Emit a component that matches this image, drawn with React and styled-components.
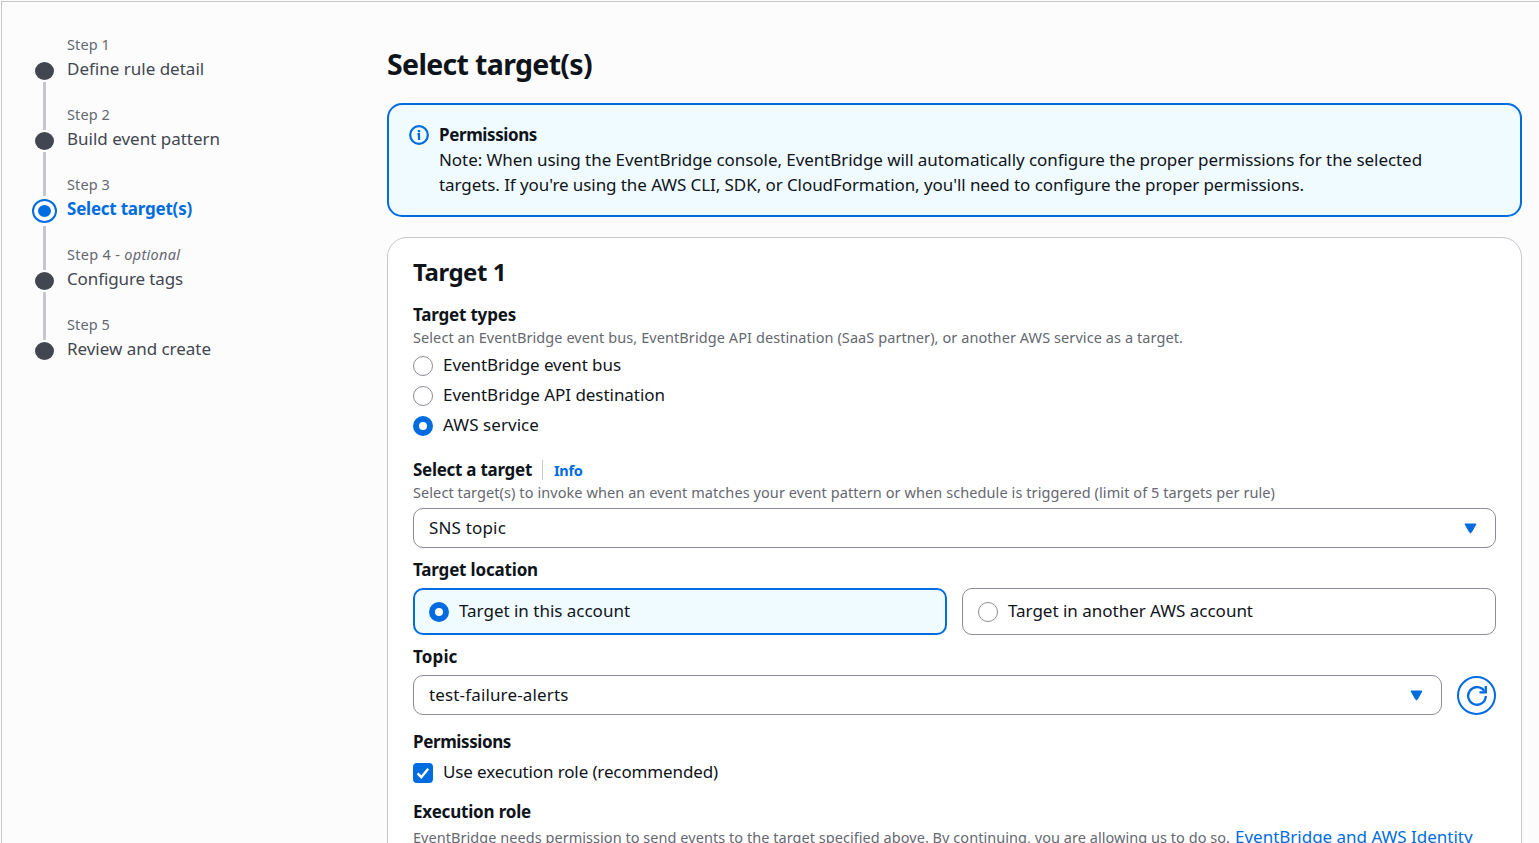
import React from 'react';
import styled, { createGlobalStyle, css } from 'styled-components';

const color = {
  text: '#0f141a',
  body: '#424650',
  muted: '#656871',
  accent: '#006ce0',
  accentBg: '#f0fbff',
  border: '#c6c6cd',
  control: '#8c8c94',
  page: '#fcfcfd',
};

const GlobalStyle = createGlobalStyle`
  *, *::before, *::after { box-sizing: border-box; }
  html, body { margin: 0; height: 100%; overflow: hidden; background: ${color.page}; }
  body {
    font-family: "Noto Sans", "Open Sans", sans-serif;
    font-size: 17px;
    line-height: 25px;
    color: ${color.text};
  }
`;

const tracked = css`
  letter-spacing: ${(p) => p.$track ?? 0}px;
  white-space: nowrap;
`;

const Frame = styled.div`
  display: grid;
  grid-template-columns: 355px 1135px;
  margin: 1px 0 0 1px;
  height: calc(100vh - 1px);
  overflow: hidden;
  border-top: 1px solid ${color.border};
  border-left: 1px solid ${color.border};
  padding-left: 30px;
`;

/* Wizard navigation */

const Steps = styled.ol`
  list-style: none;
  margin: 0;
  padding: 32px 0 0;
`;

const Step = styled.li`
  display: grid;
  grid-template-columns: 25px 1fr;
  column-gap: 10px;
  height: 70px;
`;

const Rail = styled.div`
  display: flex;
  flex-direction: column;
  align-items: center;
`;

const Segment = styled.span`
  width: 3px;
  height: ${(p) => p.$height}px;
  background: ${(p) => (p.$hidden ? 'transparent' : color.border)};
`;

const Marker = styled.span`
  flex: none;
  width: 19px;
  height: 18px;
  margin: 2px 0;
  border-radius: 50%;
  background: ${color.body};
  ${(p) =>
    p.$active &&
    css`
      width: 25px;
      height: 24px;
      margin: 3px 0 3px;
      border: 2px solid ${color.accent};
      padding: 4px;
      background: ${color.accent} content-box;
    `}
`;

const StepNumber = styled.div`
  font-size: 14.5px;
  line-height: 20px;
  color: ${color.muted};
  ${tracked}
`;

const StepName = styled.div`
  margin-top: 2px;
  color: ${(p) => (p.$active ? color.accent : color.body)};
  font-weight: ${(p) => (p.$active ? 700 : 400)};
  ${tracked}
`;

/* Main column */

const Main = styled.main`
  padding-top: 43px;
`;

const PageTitle = styled.h1`
  margin: 0 0 20px;
  font-size: 28.5px;
  line-height: 38px;
  font-weight: 700;
  ${tracked}
`;

const Alert = styled.section`
  display: flex;
  gap: 10px;
  height: 114px;
  padding: 17px 20px;
  border: 2px solid ${color.accent};
  border-radius: 15px;
  background: ${color.accentBg};
  svg { margin-top: 3px; flex: none; }
`;

const Line = styled.div`
  ${tracked}
`;

const Card = styled.section`
  margin-top: 20px;
  height: 700px;
  padding: 19px 25px;
  border: 1px solid ${color.border};
  border-radius: 20px;
  background: #fff;
`;

const CardTitle = styled.h2`
  margin: 0 0 15px;
  font-size: 24px;
  line-height: 30px;
  font-weight: 700;
  ${tracked}
`;

const Field = styled.div`
  margin-top: ${(p) => p.$gap ?? 0}px;
`;

const Label = styled.div`
  font-weight: 700;
  height: 25px;
  ${tracked}
`;

const LabelRow = styled.div`
  display: flex;
  align-items: center;
  height: 25px;
`;

const InfoLink = styled.a`
  margin: 1px 0 0 10px;
  padding-left: 11px;
  border-left: 1px solid ${color.border};
  font-size: 14.5px;
  line-height: 20px;
  font-weight: 700;
  color: ${color.accent};
  ${tracked}
`;

const Hint = styled.div`
  font-size: 14.5px;
  line-height: 20px;
  height: 20px;
  color: ${color.muted};
  ${tracked}
`;

const RoleHint = styled(Hint)`
  display: flex;
  align-items: baseline;
  height: 25px;
  line-height: 25px;
`;

const Options = styled.div`
  display: flex;
  flex-direction: column;
  gap: 5px;
  margin-top: 5px;
`;

const Choice = styled.label`
  display: flex;
  gap: 10px;
  height: 25px;
  ${tracked}
`;

const Radio = styled.span`
  flex: none;
  width: 20px;
  height: 20px;
  margin-top: 4px;
  border-radius: 50%;
  background: #fff;
  border: ${(p) => (p.$checked ? `6px solid ${color.accent}` : `1px solid ${color.control}`)};
`;

const Checkbox = styled.span`
  display: grid;
  place-items: center;
  flex: none;
  width: 20px;
  height: 20px;
  margin-top: 4px;
  border-radius: 4px;
  background: ${color.accent};
`;

const Select = styled.div`
  display: flex;
  flex: 1;
  align-items: center;
  justify-content: space-between;
  height: 40px;
  padding: 0 18.5px 2px 15px;
  border: 1px solid ${color.control};
  border-radius: 10px;
  background: #fff;
  svg { margin-top: 2px; }
  ${tracked}
`;

const SelectRow = styled.div`
  display: flex;
  align-items: center;
  gap: 15px;
  margin-top: 6px;
`;

const Tiles = styled.div`
  display: grid;
  grid-template-columns: 1fr 1fr;
  gap: 15px;
  margin-top: 6px;
`;

const Tile = styled.label`
  display: flex;
  gap: 10px;
  height: 47px;
  padding: 9px 15px;
  border: 1px solid ${color.control};
  border-radius: 10px;
  ${tracked}
  ${(p) =>
    p.$selected &&
    css`
      padding: 8px 14px;
      border: 2px solid ${color.accent};
      background: ${color.accentBg};
    `}
`;

const RoundButton = styled.button`
  display: grid;
  place-items: center;
  width: 39px;
  height: 39px;
  margin-top: 1px;
  padding: 0;
  border: 2px solid ${color.accent};
  border-radius: 50%;
  background: #fff;
  color: ${color.accent};
`;

const TextLink = styled.a`
  margin-left: 5px;
  font-size: 17px;
  color: ${color.accent};
  ${tracked}
`;

const InfoIcon = () => (
  <svg width="20" height="20" viewBox="0 0 20 20" fill="none" stroke={color.accent} strokeWidth="2.2">
    <circle cx="10" cy="10" r="8.8" />
    <path d="M8.5 9.2H10V15M8.8 6.2h2.4" />
  </svg>
);

const Caret = () => (
  <svg width="13" height="11" viewBox="0 0 13 11" fill={color.accent} stroke={color.accent} strokeLinejoin="round">
    <path d="M1 1h11L7.4 9.2Q6.5 10.6 5.6 9.2z" />
  </svg>
);

const RefreshIcon = () => (
  <svg width="20" height="20" viewBox="0 0 20 20" fill="none" stroke="currentColor" strokeWidth="2.3">
    <path d="M12.5 6.4h6.3V0" />
    <path d="M18.8 10a8.8 8.8 0 1 1-1.5-5" />
  </svg>
);

const CheckIcon = () => (
  <svg width="20" height="20" viewBox="0 0 20 20" fill="none" stroke="#fff" strokeWidth="2.4">
    <path d="M4.6 10.4l3.7 3.8 6.9-8.4" />
  </svg>
);

const steps = [
  { name: 'Define rule detail' },
  { name: 'Build event pattern' },
  { name: 'Select target(s)', active: true, track: -0.226 },
  { name: 'Configure tags', optional: true, track: -0.121 },
  { name: 'Review and create', track: -0.028 },
];

const targetTypes = [
  { label: 'EventBridge event bus', track: -0.063 },
  { label: 'EventBridge API destination', track: -0.04 },
  { label: 'AWS service', track: 0.067, checked: true },
];

export default function App() {
  return (
    <>
      <GlobalStyle />
      <Frame>
        <Steps>
          {steps.map((step, i) => (
            <Step key={step.name}>
              <Rail>
                <Segment $height={step.active ? 22 : 26} $hidden={i === 0} />
                <Marker $active={step.active} />
                {i < steps.length - 1 && <Segment $height={step.active ? 18 : 22} />}
              </Rail>
              <div>
                <StepNumber $track={step.optional ? 0.3 : 0.108}>
                  Step {i + 1}
                  {step.optional && <> - <i>optional</i></>}
                </StepNumber>
                <StepName $active={step.active} $track={step.track}>{step.name}</StepName>
              </div>
            </Step>
          ))}
        </Steps>

        <Main>
          <PageTitle $track={-0.664}>Select target(s)</PageTitle>
          <Alert>
            <InfoIcon />
            <div>
              <Label $track={-0.393}>Permissions</Label>
              <Line $track={-0.061}>
                Note: When using the EventBridge console, EventBridge will automatically configure the proper permissions for the selected
              </Line>
              <Line $track={-0.077}>
                targets. If you're using the AWS CLI, SDK, or CloudFormation, you'll need to configure the proper permissions.
              </Line>
            </div>
          </Alert>

          <Card>
            <CardTitle $track={-0.459}>Target 1</CardTitle>

            <Field>
              <Label $track={-0.189}>Target types</Label>
              <Hint $track={0.08}>
                Select an EventBridge event bus, EventBridge API destination (SaaS partner), or another AWS service as a target.
              </Hint>
              <Options>
                {targetTypes.map((t) => (
                  <Choice key={t.label} $track={t.track}>
                    <Radio $checked={t.checked} />
                    {t.label}
                  </Choice>
                ))}
              </Options>
            </Field>

            <Field $gap={20}>
              <LabelRow>
                <Label $track={-0.278}>Select a target</Label>
                <InfoLink $track={-0.31}>Info</InfoLink>
              </LabelRow>
              <Hint $track={0.081}>
                Select target(s) to invoke when an event matches your event pattern or when schedule is triggered (limit of 5 targets per rule)
              </Hint>
              <SelectRow>
                <Select $track={0.175}>SNS topic<Caret /></Select>
              </SelectRow>
            </Field>

            <Field $gap={9}>
              <Label $track={-0.169}>Target location</Label>
              <Tiles>
                <Tile $selected $track={-0.012}><Radio $checked />Target in this account</Tile>
                <Tile $track={-0.015}><Radio />Target in another AWS account</Tile>
              </Tiles>
            </Field>

            <Field $gap={9}>
              <Label $track={0.131}>Topic</Label>
              <SelectRow>
                <Select $track={0.148}>test-failure-alerts<Caret /></Select>
                <RoundButton aria-label="Refresh"><RefreshIcon /></RoundButton>
              </SelectRow>
            </Field>

            <Field $gap={14}>
              <Label $track={-0.393}>Permissions</Label>
              <Options>
                <Choice $track={-0.129}>
                  <Checkbox><CheckIcon /></Checkbox>
                  Use execution role (recommended)
                </Choice>
              </Options>
            </Field>

            <Field $gap={15}>
              <Label $track={-0.188}>Execution role</Label>
              <RoleHint $track={0.043}>
                EventBridge needs permission to send events to the target specified above. By continuing, you are allowing us to do so.
                <TextLink $track={-0.018}>EventBridge and AWS Identity</TextLink>
              </RoleHint>
            </Field>
          </Card>
        </Main>
      </Frame>
    </>
  );
}
